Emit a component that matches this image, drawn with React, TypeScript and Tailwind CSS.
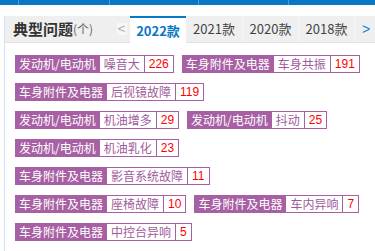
import React from "react";

const cjk = { fontFamily: '"Noto Sans CJK SC", "Noto Sans", sans-serif' };

type Tag = { cat: string; issue: string; n: number };

const rows: Tag[][] = [
  [
    { cat: "发动机/电动机", issue: "噪音大", n: 226 },
    { cat: "车身附件及电器", issue: "车身共振", n: 191 },
  ],
  [{ cat: "车身附件及电器", issue: "后视镜故障", n: 119 }],
  [
    { cat: "发动机/电动机", issue: "机油增多", n: 29 },
    { cat: "发动机/电动机", issue: "抖动", n: 25 },
  ],
  [{ cat: "发动机/电动机", issue: "机油乳化", n: 23 }],
  [{ cat: "车身附件及电器", issue: "影音系统故障", n: 11 }],
  [
    { cat: "车身附件及电器", issue: "座椅故障", n: 10 },
    { cat: "车身附件及电器", issue: "车内异响", n: 7 },
  ],
  [{ cat: "车身附件及电器", issue: "中控台异响", n: 5 }],
];

function TagItem({ t }: { t: Tag }) {
  return (
    <div className="flex h-[18px] items-stretch text-[12px] leading-[16px]">
      <span className="flex items-center bg-[#a760a3] px-[4px] text-white">{t.cat}</span>
      <span className="flex items-center border border-l-0 border-[#a760a3] bg-white px-[4px] text-[#a05a9c]">
        {t.issue}
      </span>
      <span
        className="flex items-center border border-l-0 border-[#a760a3] bg-white px-[4px] text-[#ff0000]"
        style={{ fontFamily: '"Liberation Sans", sans-serif' }}
      >
        {t.n}
      </span>
    </div>
  );
}

export default function App() {
  const tabs = ["2021款", "2020款", "2018款"];
  return (
    <div className="h-[251px] w-[375px] overflow-hidden bg-white" style={cjk}>
      <div className="flex h-[5px] bg-[#0878c4]">
        <div className="w-[19px] border-r border-[#4d9dd6]" />
        <div className="w-[91px] border-r border-[#4d9dd6]" />
        <div className="w-[89px] border-r border-[#4d9dd6]" />
        <div className="w-[90px] border-r border-[#4d9dd6]" />
      </div>
      <div className="h-[11px]" />
      <div className="ml-[4px] h-[235px] border-l border-[#cfe2f7]">
        <div className="flex h-[27px] items-stretch border-b border-[#e2e2e2] bg-[#efefef]">
          <div className="flex w-[108px] items-center pl-[8px]">
            <span className="text-[15px] font-bold text-[#333]">典型问题</span>
            <span className="text-[12px] text-[#666]">(个)</span>
          </div>
          <div className="flex w-[17px] items-center justify-center">
            <span
              className="flex h-[12px] w-[10px] items-center justify-center bg-[#f7f7f7] text-[13px] text-[#aaa]"
              style={{ fontFamily: '"Liberation Sans", sans-serif' }}
            >
              &lt;
            </span>
          </div>
          <div className="-mb-px flex w-[56px] items-center justify-center border-t-2 border-[#0878c4] bg-white text-[13px] font-bold text-[#0878c4]">
            2022款
          </div>
          {tabs.map((t, i) => (
            <div
              key={t}
              className={`flex w-[56px] items-center justify-center text-[13px] text-[#444] ${
                i > 0 ? "border-l border-[#f6f6f6]" : ""
              }`}
            >
              {t}
            </div>
          ))}
          <div
            className="flex flex-1 items-center border-l border-[#f6f6f6] pl-[7px] text-[14px] text-[#1a7fd4]"
            style={{ fontFamily: '"Liberation Sans", sans-serif' }}
          >
            &gt;
          </div>
        </div>
        <div className="flex flex-col gap-[10px] pl-[10px] pt-[12px]">
          {rows.map((r, i) => (
            <div key={i} className="flex gap-[8px]">
              {r.map((t, j) => (
                <TagItem key={j} t={t} />
              ))}
            </div>
          ))}
        </div>
      </div>
    </div>
  );
}
